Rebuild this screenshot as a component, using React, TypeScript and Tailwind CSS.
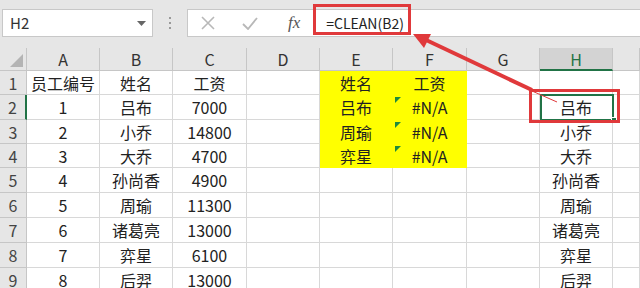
import React from "react"

const cols = ["A", "B", "C", "D", "E", "F", "G", "H", ""]
const rowHeights = [24, 25, 24, 24, 25, 25, 25, 25, 25]

const data: string[][] = [
  ["员工编号", "姓名", "工资", "", "姓名", "工资", "", "", ""],
  ["1", "吕布", "7000", "", "吕布", "#N/A", "", "吕布", ""],
  ["2", "小乔", "14800", "", "周瑜", "#N/A", "", "小乔", ""],
  ["3", "大乔", "4700", "", "弈星", "#N/A", "", "大乔", ""],
  ["4", "孙尚香", "4900", "", "", "", "", "孙尚香", ""],
  ["5", "周瑜", "11300", "", "", "", "", "周瑜", ""],
  ["6", "诸葛亮", "13000", "", "", "", "", "诸葛亮", ""],
  ["7", "弈星", "6100", "", "", "", "", "弈星", ""],
  ["8", "后羿", "13000", "", "", "", "", "后羿", ""],
]

const font = { fontFamily: '"Noto Sans CJK SC", "Noto Sans", sans-serif' }

export default function App() {
  return (
    <div className="relative h-[288px] w-[640px] overflow-hidden bg-[#e6e6e6] text-[#222]" style={font}>
      {/* formula bar */}
      <div className="flex h-[48px] items-start pt-[9px]">
        <div className="ml-[2px] flex h-[28px] w-[151px] items-center justify-between border border-[#c8c8c8] bg-white pl-[7px] pr-[6px] text-[15px] text-[#333]">
          <span>H2</span>
          <svg width="9" height="5" viewBox="0 0 9 5">
            <path d="M0 0h9L4.5 5z" fill="#666" />
          </svg>
        </div>
        <div className="flex h-[28px] w-[34px] flex-col items-center justify-center gap-[3px]">
          <span className="h-[2px] w-[2px] bg-[#999]" />
          <span className="h-[2px] w-[2px] bg-[#999]" />
          <span className="h-[2px] w-[2px] bg-[#999]" />
        </div>
        <div className="flex h-[28px] flex-1 items-center border border-r-0 border-[#c8c8c8] bg-white">
          <svg className="ml-[13px]" width="14" height="14" viewBox="0 0 14 14">
            <path d="M1 1l12 12M13 1L1 13" stroke="#b8b8b8" strokeWidth="1.6" />
          </svg>
          <svg className="ml-[27px]" width="16" height="13" viewBox="0 0 16 13">
            <path d="M1 7l5 5L15 1" stroke="#b8b8b8" strokeWidth="1.8" fill="none" />
          </svg>
          <span className="ml-[30px] text-[17px] italic text-[#555]" style={{ fontFamily: '"Liberation Serif", serif' }}>
            fx
          </span>
          <span className="ml-[26px] text-[14px] text-[#222]">=CLEAN(B2)</span>
        </div>
      </div>

      {/* sheet */}
      <div className="grid grid-cols-[27px_73px_73px_74px_73px_73px_74px_73px_73px_1fr] bg-white">
        <div className="relative h-[23px] border-b border-r border-[#c6c6c6] bg-[#e6e6e6]">
          <svg className="absolute bottom-[3px] right-[3px]" width="13" height="13" viewBox="0 0 13 13">
            <path d="M13 0v13H0z" fill="#b4b4b4" />
          </svg>
        </div>
        {cols.map((c, i) => (
          <div
            key={c + i}
            className={`flex h-[23px] items-center justify-center border-r text-[16px] ${
              c === "H"
                ? "border-b-2 border-b-[#217346] border-r-[#c6c6c6] bg-[#d3d3d3] text-[#217346]"
                : "border-b border-[#c6c6c6] bg-[#e6e6e6] text-[#333]"
            }`}
          >
            {c}
          </div>
        ))}
        {data.map((row, r) => (
          <React.Fragment key={r}>
            <div
              className={`flex items-center justify-center border-b border-[#c6c6c6] bg-[#e6e6e6] text-[16px] text-[#444] ${
                r === 1 ? "border-r-2 border-r-[#217346] bg-[#d3d3d3]" : "border-r"
              }`}
              style={{ height: rowHeights[r] }}
            >
              {r + 1}
            </div>
            {row.map((v, c) => {
              const yellow = (c === 4 || c === 5) && r <= 3
              return (
                <div
                  key={c}
                  className={`relative flex items-center justify-center border-b border-r text-[16px] ${
                    yellow ? "border-[#ffff00] bg-[#ffff00]" : "border-[#d8d8d8]"
                  }`}
                  style={{ height: rowHeights[r] }}
                >
                  {c === 5 && r >= 1 && r <= 3 && (
                    <svg className="absolute left-[2px] top-[2px]" width="6" height="6" viewBox="0 0 6 6">
                      <path d="M0 0h6L0 6z" fill="#1f8a3c" />
                    </svg>
                  )}
                  {v}
                </div>
              )
            })}
          </React.Fragment>
        ))}
      </div>

      {/* selection H2 */}
      <div className="absolute left-[540px] top-[94px] h-[27px] w-[74px] border-2 border-[#217346]" />
      <div className="absolute left-[611px] top-[117px] h-[6px] w-[6px] border border-white bg-[#217346]" />

      {/* annotations */}
      <div className="absolute left-[313px] top-[4px] h-[31px] w-[98px] border-[3px] border-[#e0393b]" />
      <div className="absolute left-[529px] top-[89px] h-[34px] w-[91px] border-[3px] border-[#e0393b]" />
      <svg className="absolute left-0 top-0" width="640" height="288" viewBox="0 0 640 288">
        <line x1="532" y1="91" x2="557" y2="102" stroke="#e0393b" strokeWidth="1" />
        <line x1="532" y1="90" x2="424" y2="39" stroke="#e0393b" strokeWidth="4" />
        <path d="M413 34L431 34L424 48z" fill="#e0393b" />
      </svg>
    </div>
  )
}
